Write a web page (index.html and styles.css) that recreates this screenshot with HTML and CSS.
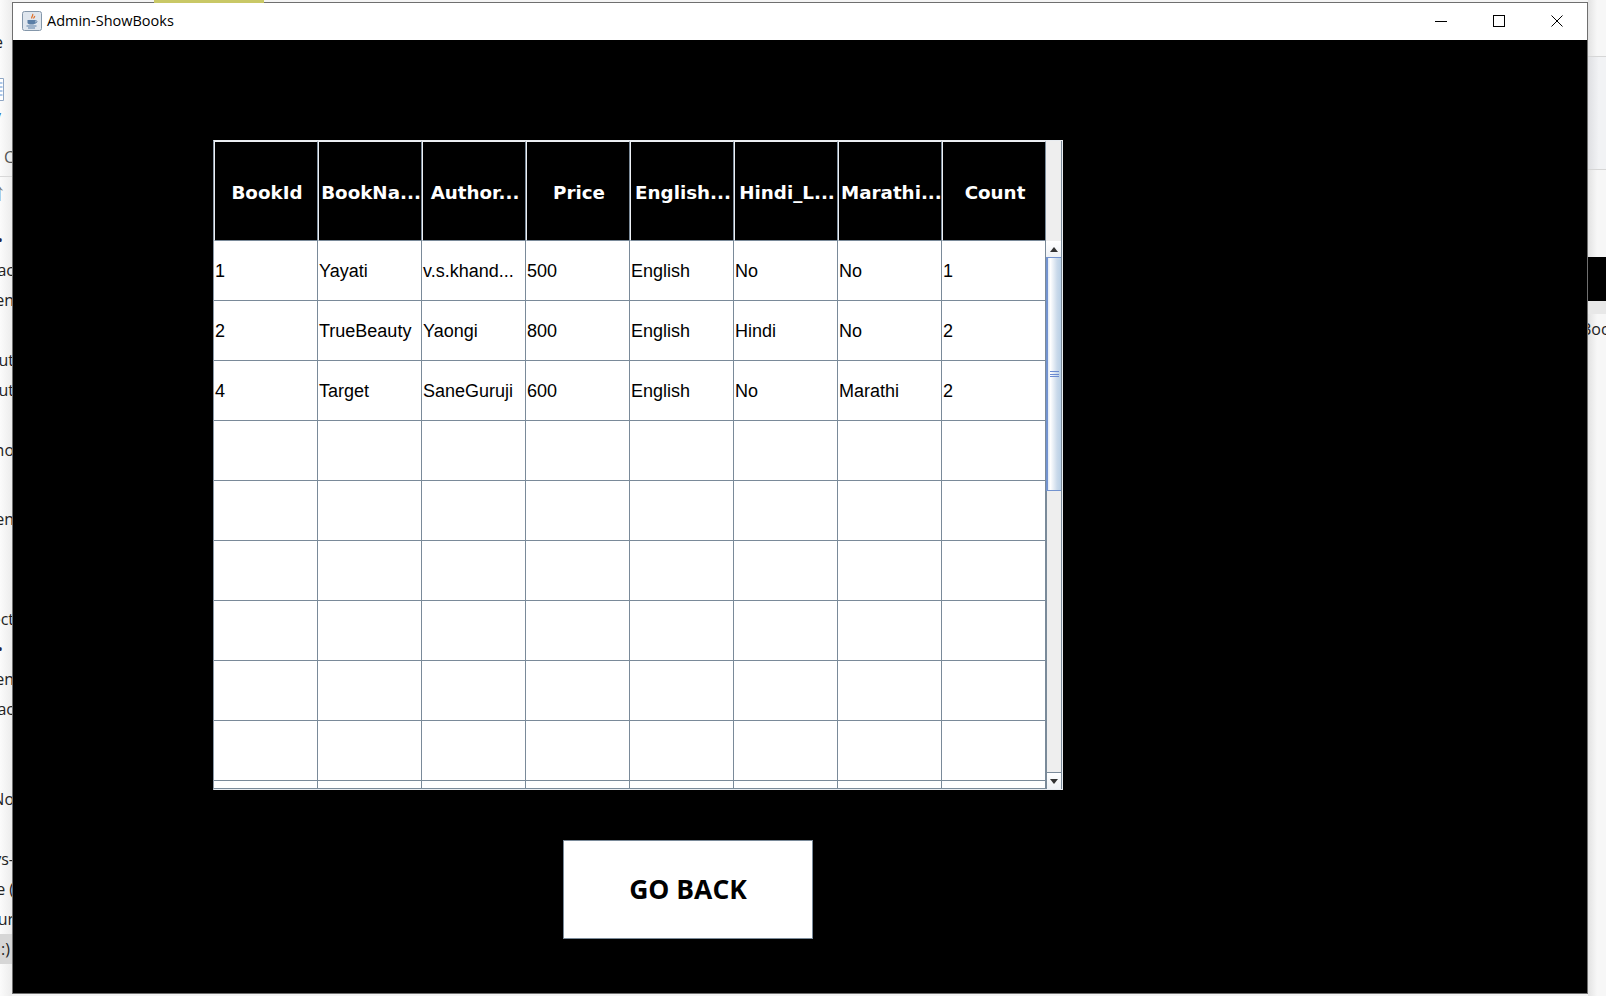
FILE: index.html
```html
<!DOCTYPE html>
<html lang="en">
<head>
<meta charset="utf-8">
<title>Admin-ShowBooks</title>
<link rel="stylesheet" href="styles.css">
</head>
<body>
<div class="desktop">
  <div class="yellow-tab"></div>
  <aside class="left-strip">
    <div class="ls ls-e">e</div>
    <div class="ls ls-clip"><svg width="4" height="24" viewBox="0 0 4 24" aria-hidden="true"><path d="M0 1.500h3.500v22H0" fill="#fff" stroke="#8fa6c4"/><path d="M0 6h2.500M0 10h2.500M0 14h2.500M0 18h2.500" stroke="#5b8fd0"/></svg></div>
    <div class="ls ls-v">v</div>
    <div class="ls ls-c">C</div>
    <div class="ls ls-arrow">↑</div>
    <div class="ls ls-dot">•</div>
    <div class="ls">ac</div>
    <div class="ls">en</div>
    <div class="ls"></div>
    <div class="ls">ut</div>
    <div class="ls">ut</div>
    <div class="ls"></div>
    <div class="ls">no</div>
    <div class="ls ls-gap"></div>
    <div class="ls ls-en2">en</div>
    <div class="ls"></div>
    <div class="ls"></div>
    <div class="ls ls-ect">ect</div>
    <div class="ls ls-dot">•</div>
    <div class="ls">en</div>
    <div class="ls">ac</div>
    <div class="ls"></div>
    <div class="ls"></div>
    <div class="ls">No</div>
    <div class="ls"></div>
    <div class="ls">ys-</div>
    <div class="ls">e (</div>
    <div class="ls">lur</div>
    <div class="ls ls-sel">:)</div>
  </aside>
  <main class="window">
    <header class="titlebar">
      <svg class="app-icon" viewBox="0 0 20 20" width="20" height="20" aria-hidden="true">
        <rect x="0.5" y="0.5" width="19" height="19" rx="2" fill="#dfe6ee" stroke="#8497aa"/>
        <path d="M10.5 3c1.5 1.500-1.800 2.600-.6 4.500M12.500 5c.6 1-1.300 1.600-.7 2.500" fill="none" stroke="#e0702a" stroke-width="1.300"/>
        <path d="M5.500 9h8v2.500c0 1.500-1.500 2-4 2s-4-.5-4-2z" fill="#5a7ea6"/>
        <path d="M13.500 9.500c2 0 2 2.500-.5 2.500M4.500 15h10M6 17h7" fill="none" stroke="#5a7ea6"/>
      </svg>
      <span class="title">Admin-ShowBooks</span>
      <div class="controls">
        <button class="ctl" aria-label="Minimize"><svg width="12" height="12" viewBox="0 0 12 12"><path d="M0 6.500h12" stroke="#000"/></svg></button>
        <button class="ctl" aria-label="Maximize"><svg width="12" height="12" viewBox="0 0 12 12"><rect x="0.500" y="0.500" width="11" height="11" fill="none" stroke="#000"/></svg></button>
        <button class="ctl" aria-label="Close"><svg width="12" height="12" viewBox="0 0 12 12"><path d="M0.500 0.500l11 11M11.500 0.500l-11 11" stroke="#000"/></svg></button>
      </div>
    </header>
    <div class="content">
      <div class="scrollpane">
        <div class="table-view">
          <table class="books">
            <thead>
              <tr><th>BookId</th><th>BookNa...</th><th>Author...</th><th>Price</th><th>English...</th><th>Hindi_L...</th><th>Marathi...</th><th>Count</th></tr>
            </thead>
            <tbody>
              <tr><td>1</td><td>Yayati</td><td>v.s.khand...</td><td>500</td><td>English</td><td>No</td><td>No</td><td>1</td></tr>
              <tr><td>2</td><td>TrueBeauty</td><td>Yaongi</td><td>800</td><td>English</td><td>Hindi</td><td>No</td><td>2</td></tr>
              <tr><td>4</td><td>Target</td><td>SaneGuruji</td><td>600</td><td>English</td><td>No</td><td>Marathi</td><td>2</td></tr>
              <tr><td></td><td></td><td></td><td></td><td></td><td></td><td></td><td></td></tr>
              <tr><td></td><td></td><td></td><td></td><td></td><td></td><td></td><td></td></tr>
              <tr><td></td><td></td><td></td><td></td><td></td><td></td><td></td><td></td></tr>
              <tr><td></td><td></td><td></td><td></td><td></td><td></td><td></td><td></td></tr>
              <tr><td></td><td></td><td></td><td></td><td></td><td></td><td></td><td></td></tr>
              <tr><td></td><td></td><td></td><td></td><td></td><td></td><td></td><td></td></tr>
              <tr><td></td><td></td><td></td><td></td><td></td><td></td><td></td><td></td></tr>
            </tbody>
          </table>
        </div>
        <div class="scroll-col">
          <div class="corner"></div>
          <div class="scrollbar">
            <div class="sb-btn"><span class="arrow-up"></span></div>
            <div class="thumb"><span class="grip"></span></div>
            <div class="track"></div>
            <div class="sb-btn sb-btn-down"><span class="arrow-down"></span></div>
          </div>
        </div>
      </div>
      <button class="go-back">GO BACK</button>
    </div>
  </main>
  <aside class="right-strip">
    <div class="rs-top"></div>
    <div class="rs-panel"></div>
    <div class="rs-panel rs-panel2"></div>
    <div class="rs-dark"></div>
    <div class="rs-tool"></div>
    <div class="rs-text">Boc</div>
  </aside>
</div>
</body>
</html>
```
FILE: styles.css
```css
* { box-sizing: border-box; }
html, body { margin: 0; height: 100%; overflow: hidden; }
body { background: #f3f3f3; font-family: "Liberation Sans", Arial, sans-serif; }

.desktop { position: relative; display: flex; width: 1606px; height: 996px; background: #f4f4f4; }
.yellow-tab { position: absolute; top: 0; left: 154px; width: 110px; height: 3px; background: #c9c866; }

/* background windows, peeking out on both sides */
.left-strip { width: 12px; height: 996px; padding-top: 27px; overflow: hidden; flex: none;
  background: linear-gradient(90deg, #fbfbfb, #ececec); }
.ls { height: 30px; font: 16px/30px "Open Sans", sans-serif; color: #222; white-space: nowrap;
  display: flex; justify-content: flex-end; margin-right: -2px; }
.ls-e { height: 29px; justify-content: flex-start; margin-left: -6px; }
.ls-clip { height: 45px; align-items: flex-end; justify-content: flex-start; margin-right: 0; }
.ls-v { height: 41px; color: #2a6fb0; justify-content: flex-start; margin-left: -7px; }
.ls-c { height: 35px; border-bottom: 1px solid #d8d8d8; color: #555; }
.ls-arrow { height: 48px; color: #777; font: 24px/30px "Liberation Sans", sans-serif; justify-content: flex-start; margin-left: -6px; }
.ls-dot { color: #224; justify-content: flex-start; margin-left: -3px; }
.ls-gap { height: 39px; }
.ls-en2 { height: 40px; }
.ls-sel { background: #d6d6d6; margin-right: 0; padding-right: 2px; }

.right-strip { width: 18px; height: 996px; flex: none; overflow: hidden; display: flex; flex-direction: column;
  background: linear-gradient(90deg, #e2e2e2, #f7f7f7 50%); }
.rs-top { height: 56px; }
.rs-panel { height: 113px; border-top: 1px solid #d6d6d6; background: linear-gradient(90deg, #dedfe2, #f2f3f5 60%); }
.rs-panel2 { height: 88px; background: none; }
.rs-dark { height: 44px; background: #000; }
.rs-tool { height: 13px; background: #e8e8e8; }
.rs-text { font: 16px/24px "Open Sans", sans-serif; color: #222; margin: 3px 0 0 -7px; white-space: nowrap; }

/* main window */
.window { width: 1576px; height: 992px; margin-top: 2px; flex: none; display: flex; flex-direction: column;
  background: #000; border: 1px solid #6f6f6f; }
.titlebar { display: flex; align-items: center; height: 37px; padding: 0 1px 2px 9px; background: #fff; flex: none; }
.app-icon { flex: none; }
.title { margin-left: 5px; font: 14.5px/20px "Open Sans", sans-serif; color: #000; }
.controls { margin-left: auto; display: flex; }
.ctl { width: 58px; height: 35px; padding: 0; border: 0; background: none; display: flex; align-items: center; justify-content: center; }

.content { flex: 1; display: flex; flex-direction: column; align-items: flex-start; padding: 100px 0 0 200px; background: #000; }

/* JTable */
.scrollpane { display: flex; width: 850px; height: 650px; background: #fff; border: 1px solid #e8ecf0; border-left-color: #8a98a6; }
.table-view { width: 832px; height: 648px; overflow: hidden; flex: none; border-bottom: 1px solid #7a8a99; }
.books { border-collapse: separate; border-spacing: 0; table-layout: fixed; width: 832px; }
.books th { width: 104px; height: 100px; padding: 3px 0 0 2px; background: #000; color: #fff; overflow: hidden; white-space: nowrap;
  font: bold 18.3px "DejaVu Sans", Verdana, sans-serif; text-align: center;
  border-left: 1px solid #eef1f5; border-top: 1px solid #eef1f5; border-bottom: 1px solid #7a8a99; border-right: 1px solid #7a8a99; }
.books td { height: 60px; padding: 2px 0 0 1px; color: #000; white-space: nowrap; overflow: hidden;
  font: 18px "Liberation Sans", Arial, sans-serif;
  border-right: 1px solid #7a8a99; border-bottom: 1px solid #7a8a99; }

.scroll-col { flex: 1; display: flex; flex-direction: column; background: #eee; border-right: 1px solid #7a8a99; }
.corner { height: 100px; background: #eee; flex: none; }
.scrollbar { flex: 1; display: flex; flex-direction: column; }
.sb-btn { height: 16px; flex: none; background: linear-gradient(#fff, #eef1f5); display: flex; align-items: center; justify-content: center; }
.sb-btn-down { height: 17px; border-top: 1px solid #7a8a99; border-left: 1px solid #7a8a99; }
.arrow-up { width: 0; height: 0; border: 4px solid transparent; border-top: 0; border-bottom: 5px solid #333; }
.arrow-down { width: 0; height: 0; border: 4px solid transparent; border-bottom: 0; border-top: 5px solid #333; }
.thumb { height: 234px; flex: none; display: flex; align-items: center; justify-content: center;
  background: linear-gradient(90deg, #dfe9f5, #fff 18%, #c9d9ea 70%, #b8cfe5); border-left: 2px solid #7393cf; border-top: 1px solid #7393cf; border-bottom: 1px solid #7393cf; }
.grip { width: 9px; height: 6px; border-top: 1px solid #6b8bd0; border-bottom: 1px solid #6b8bd0;
  background: linear-gradient(#6b8bd0,#6b8bd0) center/100% 1px no-repeat; }
.track { flex: 1; background: #eee; border-left: 1px solid #7a8a99; }

.go-back { width: 250px; height: 99px; margin: 50px 0 0 350px; padding: 0 0 1px; background: #fff; color: #000; border: 1px solid #7a8a99;
  font: bold 26.5px "Open Sans", Tahoma, sans-serif; }
```
